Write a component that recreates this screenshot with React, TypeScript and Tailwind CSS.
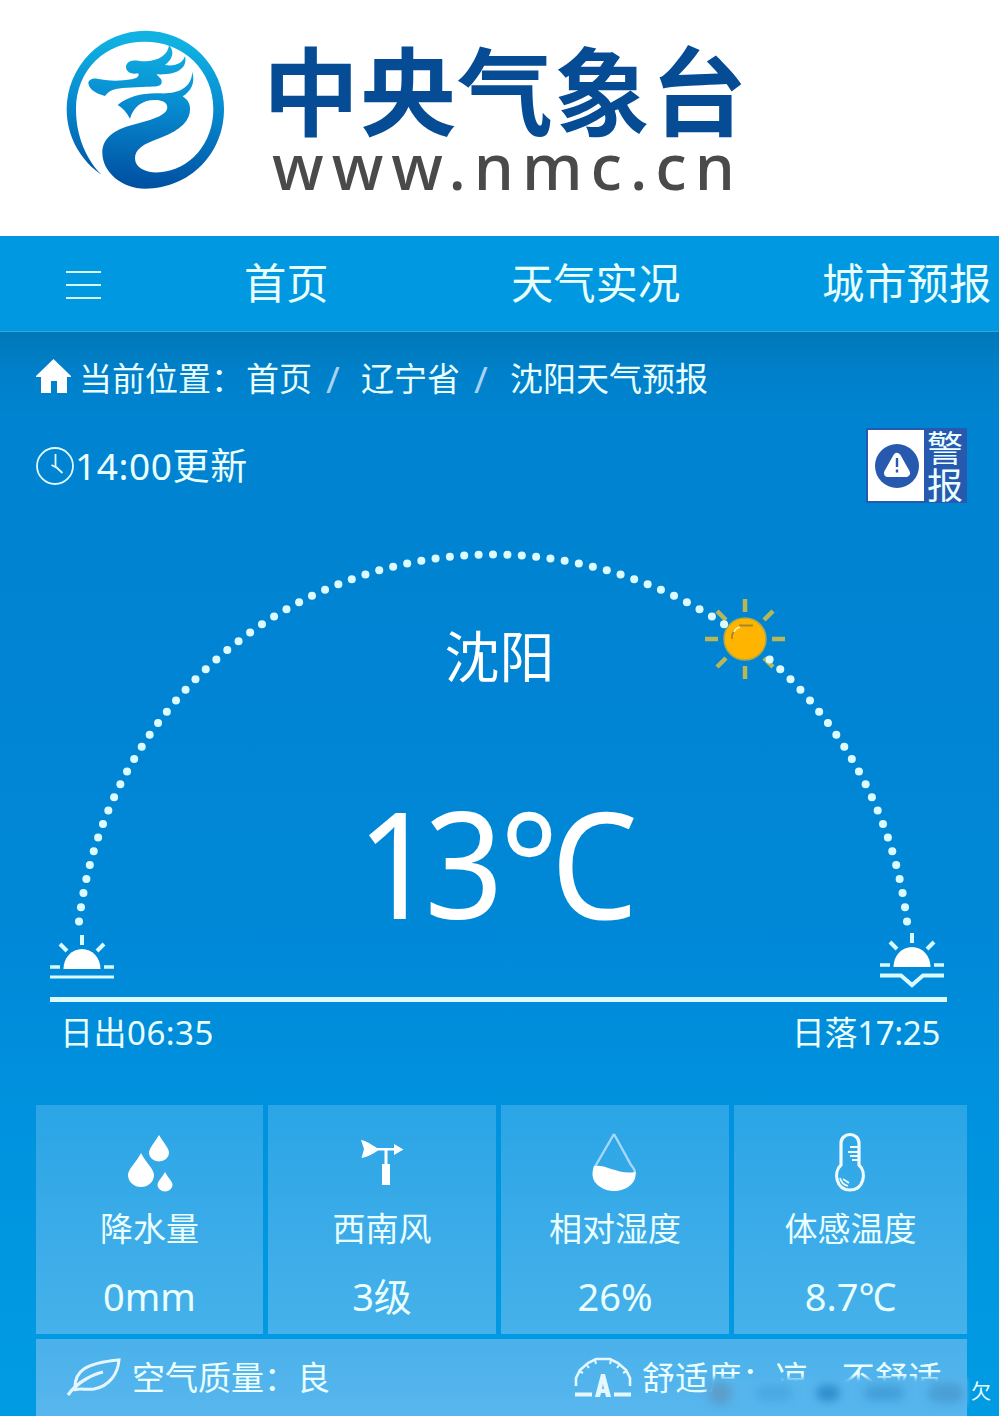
import type { ReactNode } from "react";

/* ---------- Data ---------- */

const navItems = ["天气实况", "城市预报"];

type Metric = { label: string; value: string; icon: ReactNode };

/* ---------- Helpers ---------- */

const SUN = { x: 745, y: 639 };

// Evenly spaced dots along the sun's path, leaving a gap where the sun is
function trackDots() {
  const center = { x: 493, y: 971.5 };
  const radius = 417;
  const count = 84;
  const sweep = Math.asin(414 / radius);
  const dots: { x: number; y: number }[] = [];

  for (let i = 0; i <= count; i++) {
    const a = -sweep + (2 * sweep * i) / count;
    const x = center.x + radius * Math.sin(a);
    const y = center.y - radius * Math.cos(a);
    if (Math.hypot(x - SUN.x, y - SUN.y) > 24) dots.push({ x, y });
  }
  return dots;
}

/* ---------- Icons ---------- */

function DragonLogo() {
  return (
    <svg className="h-[180px] w-[190px] shrink-0" viewBox="0 0 570 540">
      <defs>
        <linearGradient id="logo" gradientUnits="userSpaceOnUse" x1="300" y1="60" x2="270" y2="490">
          <stop offset="0" stopColor="#10b2e2" />
          <stop offset="0.45" stopColor="#078bd0" />
          <stop offset="1" stopColor="#0052a3" />
        </linearGradient>
      </defs>
      <g fill="url(#logo)">
        <path d="M155 465C92 422 50 350 50 268A236 236 0 0 1 522 268C522 400 420 506 286 506C215 506 157 455 157 398C157 350 200 325 260 311C320 297 352 282 352 262C352 246 335 240 315 240C275 240 250 262 240 296C230 277 218 264 203 255C235 228 280 218 330 220C390 222 425 200 427 155C437 190 422 214 398 229C415 240 421 255 420 270C418 310 380 335 330 354C280 372 255 387 255 415C255 445 290 460 330 457C420 450 490 370 490 268C490 150 400 65 284 65C165 65 78 150 78 268C78 350 110 420 155 465Z" />
        <path d="M115 190C115 176 135 172 150 178C180 184 215 183 245 178C262 174 268 170 265 160C240 166 228 152 228 142C228 125 245 120 265 122C300 128 352 118 357 75C377 97 365 120 345 135C375 140 398 130 405 108C414 145 380 166 320 163C325 172 337 175 335 188C333 200 315 199 290 200L230 203C195 205 180 208 165 228C140 222 118 210 115 190Z" />
      </g>
    </svg>
  );
}

function HomeIcon() {
  return (
    <svg className="h-9 w-9" viewBox="0 0 36 36" fill="#fff">
      <path d="M17.500 0L35 17V18H31V34H21V22H15V34H5V18H0V17Z" />
    </svg>
  );
}

function ClockIcon() {
  return (
    <svg className="h-[39px] w-[39px]" viewBox="0 0 39 39" fill="none" stroke="#dffbff">
      <circle cx="19" cy="19" r="18" strokeWidth="1.8" />
      <path d="M19.500 7V19.500L26.500 26M15.500 18L21 21" strokeWidth="1.8" />
    </svg>
  );
}

function DropsIcon() {
  return (
    <svg className="h-[60px] w-[60px]" viewBox="0 0 60 60" fill="#fff">
      <path d="M39 3C43 10 49 16 49 21A10 8.500 0 0 1 29 21C29 16 35 10 39 3Z" />
      <path d="M21 21C26 31 34 37 34 43A13 12 0 0 1 8 43C8 37 16 31 21 21Z" />
      <path d="M45 40C48 46 52.500 49 52.500 53A7.500 6.500 0 0 1 37.500 53C37.500 49 42 46 45 40Z" />
    </svg>
  );
}

function WindIcon() {
  return (
    <svg className="h-[60px] w-[60px]" viewBox="0 0 60 60" fill="#fff">
      <path d="M9 8C15 9 20 13 25 16H42V12L51.500 17.500L42 23V18.500H35.500V32H38V53H30V32H32.500V18.500H26C21 22 15 25 9.500 26L12 17Z" />
    </svg>
  );
}

function HumidityIcon() {
  return (
    <svg className="h-[60px] w-[60px]" viewBox="0 0 60 60">
      <path
        d="M29 2L11 33C8 40 8 46 11 50M29 2L46 33C49 36 50 38 50 42"
        fill="none"
        stroke="#a5d8fa"
        strokeWidth="2.400"
      />
      <path d="M9 34C22 32 32 43 50.500 40C52 52 40 59 29 59C18 59 3 51 9 34Z" fill="#fff" />
    </svg>
  );
}

function ThermometerIcon() {
  return (
    <svg className="h-[60px] w-[60px]" viewBox="0 0 60 60" fill="none" stroke="#eefaff">
      <path
        d="M20 33V11A9 8.500 0 0 1 38 11V33C46 40 43 58 29 58C15 58 12 40 20 33Z"
        strokeWidth="3.200"
      />
      <path d="M29 15H37M27 20H37M29 24H37M31 28H37M19 46C20 50 23 53 27 54M22 47L28 51" strokeWidth="1.800" />
    </svg>
  );
}

function LeafIcon() {
  return (
    <svg className="h-[40px] w-[56px]" viewBox="0 0 56 40" fill="none" stroke="#e6f6ff">
      <path d="M2 37C7 30 13 25 20 21C27 17 32 15 37 14" strokeWidth="3.200" />
      <path d="M9 29C9 14 18 5 53 2C52 15 44 28 28 31C20 32 14 30 8 32" strokeWidth="3" />
    </svg>
  );
}

function ComfortIcon() {
  return (
    <svg className="h-[42px] w-[58px]" viewBox="0 0 58 42" fill="none" stroke="#e6f8ff">
      <path d="M2 29V21L6 13L14 6L22 2H36L44 6L52 13L56 21V29" strokeWidth="2.600" />
      <path d="M5 14L9 16M12 7L15 11M21 3L22 7M37 3L36 7M46 7L43 11M53 14L49 16" strokeWidth="2" />
      <path d="M1 37.500H18M40 37.500H57" strokeWidth="4" />
      <path d="M27 17H31L37 40H32L31 36H27L26 40H21ZM28 32H30L29 27Z" fill="#e6f8ff" fillRule="evenodd" stroke="none" />
    </svg>
  );
}

const metrics: Metric[] = [
  { label: "降水量", value: "0mm", icon: <DropsIcon /> },
  { label: "西南风", value: "3级", icon: <WindIcon /> },
  { label: "相对湿度", value: "26%", icon: <HumidityIcon /> },
  { label: "体感温度", value: "8.7℃", icon: <ThermometerIcon /> },
];

/* ---------- Sections ---------- */

function SiteHeader() {
  return (
    <header className="flex h-[236px] bg-white pt-5 pl-[50px]">
      <DragonLogo />
      <div className="pt-[18px] pl-[23px] whitespace-nowrap">
        <div className="h-[106px] text-[96px] leading-[106px] font-bold tracking-[1px] text-[#064c94]">
          中央气象台
        </div>
        <div className="-mt-1.5 pl-[9px] text-[64px] leading-[56px] font-medium tracking-[8px] text-[#4a4a4a]">
          www.nmc.cn
        </div>
      </div>
    </header>
  );
}

function NavBar() {
  return (
    <nav className="flex h-24 items-center overflow-hidden border-b border-[#36a5dd] bg-[#0099e1] pb-px text-[42.3px] whitespace-nowrap text-[#eaffff]">
      <div className="ml-[66px] flex w-[35px] shrink-0 flex-col gap-[11px] pt-1">
        <span className="h-[2px] bg-[#d5fbff]" />
        <span className="h-[2px] bg-[#d5fbff]" />
        <span className="h-[2px] bg-[#d5fbff]" />
      </div>
      <a className="ml-[143px] w-[267px] shrink-0">首页</a>
      {navItems.map((item) => (
        <a key={item} className="w-[311px] shrink-0">
          {item}
        </a>
      ))}
    </nav>
  );
}

function Breadcrumb() {
  return (
    <div className="flex h-[50px] items-center pl-9 text-[33px] whitespace-nowrap">
      <div className="-mt-1">
        <HomeIcon />
      </div>
      <span className="ml-[7px] w-[167px]">当前位置：</span>
      <span className="w-[80px]">首页</span>
      <span className="w-[35px] text-[37px] text-[#a9d3f2]">/</span>
      <span className="w-[113px]">辽宁省</span>
      <span className="w-[36px] text-[37px] text-[#a9d3f2]">/</span>
      <span>沈阳天气预报</span>
    </div>
  );
}

function AlertBadge() {
  return (
    <div className="flex h-[75px] w-[101px] bg-[#2759ae] p-[2px]">
      <svg className="h-[71px] w-14 shrink-0 bg-white" viewBox="0 0 56 71">
        <circle cx="29" cy="36" r="22" fill="#2759ae" />
        <path d="M29 27L38 43H20Z" fill="#fff" stroke="#fff" strokeWidth="8" strokeLinejoin="round" />
        <path d="M29 28V37M29 39.500V42.500" stroke="#2759ae" strokeWidth="2.400" />
      </svg>
      <div className="pl-[3px] text-[36px] leading-[37px]">
        <div>警</div>
        <div>报</div>
      </div>
    </div>
  );
}

// Half sun with rays, shared by the sunrise and sunset markers
function HalfSun({ x, y, sunset = false }: { x: number; y: number; sunset?: boolean }) {
  return (
    <g transform={`translate(${x} ${y})`} stroke="#d9fbff" strokeWidth="4" fill="none">
      <path d="M-18.500 0A18.500 20 0 0 1 18.500 0Z" fill="#fff" stroke="none" />
      <path d="M0 -34V-24M-22 -25L-15 -18M22 -25L15 -18" />
      <path d="M-32 -2H-22M22 -2H32" strokeWidth="3.500" />
      <path d={sunset ? "M-32 8.500H-11L0 18L11 8.500H32" : "M-32 8H32"} strokeWidth={sunset ? 4 : 3} />
    </g>
  );
}

function SunTrack() {
  return (
    <div className="relative h-[556px]">
      <svg className="absolute inset-0 h-[556px] w-[999px]" viewBox="0 510 999 556">
        <g transform={`translate(${SUN.x} ${SUN.y})`}>
          <path
            d="M0 -40V-27M0 27V40M-40 0H-27M27 0H40M-28 -28L-19 -19M28 -28L19 -19M-28 28L-19 19M28 28L19 19"
            stroke="#b8b657"
            strokeWidth="4.500"
          />
          <circle r="21" fill="#ffb400" stroke="#a4aa50" strokeWidth="1.500" />
          <path d="M-6 -13.500H8M-13 0C-13.500 -4 -12 -7 -10 -9" fill="none" stroke="#a9852d" strokeWidth="1.800" />
          <path d="M-11 -7C-10 -10 -8 -11 -5 -12" fill="none" stroke="#fff3b8" strokeWidth="1.800" />
        </g>
        <g fill="#dcfbff">
          {trackDots().map((dot, i) => (
            <circle key={i} cx={dot.x} cy={dot.y} r="4" />
          ))}
        </g>
        <HalfSun x={82} y={969} />
        <HalfSun x={912} y={967} sunset />
        <path d="M50 999.500H947" stroke="#dcfbff" strokeWidth="5" />
      </svg>
      <div className="flex flex-col items-center pt-[106px] text-white">
        <div className="h-20 text-[55px] leading-[80px]">沈阳</div>
        <div className="mt-[65px] mr-[13px] scale-x-[0.933] text-[148px] leading-[202px]">
          <span className="tracking-[-12px]">1</span>
          <span className="tracking-[-4px]">3</span>
          <span className="tracking-[-8px]">℃</span>
        </div>
      </div>
      <div className="mt-10 flex justify-between pr-[59px] pl-[60px] text-[33px] leading-[60px]">
        <span className="tracking-[0.5px]">日出06:35</span>
        <span className="tracking-[-0.3px]">日落17:25</span>
      </div>
    </div>
  );
}

function MetricCards() {
  return (
    <div className="grid grid-cols-[227px_228px_228px_233px] gap-[5px]">
      {metrics.map((m) => (
        <div
          key={m.label}
          className="flex h-[229px] flex-col items-center bg-linear-to-b from-[#2aa5e6] to-[#46b1ea] pt-[27px]"
        >
          {m.icon}
          <div className="mt-[13px] text-[33px] leading-[48px]">{m.label}</div>
          <div className="mt-[13px] text-[38px] leading-[60px]">{m.value}</div>
        </div>
      ))}
    </div>
  );
}

function SummaryRow() {
  return (
    <div className="relative mt-[5px] flex h-[77px] w-[931px] bg-linear-to-b from-[#4ab1ea] to-[#58b6ee] text-[33px] leading-[76px] whitespace-nowrap">
      <div className="flex w-[538px] items-center pl-[30px]">
        <LeafIcon />
        <span className="pl-[10px]">空气质量：良</span>
      </div>
      <div className="flex items-center">
        <ComfortIcon />
        <span className="pl-[10px] tracking-[0.3px]">舒适度：凉，不舒适</span>
      </div>
      {/* smeared strip over the lower half of the comfort text */}
      <div className="absolute top-[39px] left-[674px] h-[28px] w-[257px] bg-[#56b5ed] blur-[2px]" />
      <div className="absolute top-[42px] left-[672px] flex items-center gap-6 blur-[4px]">
        <span className="h-6 w-6 rounded-full bg-[#5a9fcd]" />
        <span className="h-4 w-9 rounded-full bg-[#49a9e2]" />
        <span className="h-4 w-6 rounded-full bg-[#2f8fcc]" />
        <span className="h-4 w-10 rounded-full bg-[#449fd9]" />
        <span className="h-5 w-9 rounded-full bg-[#4a9fd6]" />
      </div>
      <span className="absolute top-[41px] left-[935px] text-[20px] leading-6">欠</span>
    </div>
  );
}

/* ---------- Page ---------- */

export default function App() {
  return (
    <div className="h-[1416px] w-[999px] overflow-hidden bg-white font-['Noto_Sans','Noto_Sans_CJK_SC',sans-serif]">
      <SiteHeader />
      <NavBar />
      <main className="h-[1084px] bg-[linear-gradient(to_bottom,#0078b8_0px,#0080ca_40px,#0084d1_90px,#0084d3_350px,#0089d8_620px,#0092de_780px,#0099e2_1000px,#009ce3_1084px)] pt-[22px] text-[#eaffff]">
        <Breadcrumb />
        <div className="flex h-[106px] items-start justify-between pt-6 pr-8 pl-9">
          <div className="flex items-center pt-[8px] text-[37px] leading-[60px]">
            <ClockIcon />
            <span className="tracking-[0.6px]">14:00更新</span>
          </div>
          <AlertBadge />
        </div>
        <SunTrack />
        <div className="mt-[39px] pl-9">
          <MetricCards />
          <SummaryRow />
        </div>
      </main>
    </div>
  );
}
